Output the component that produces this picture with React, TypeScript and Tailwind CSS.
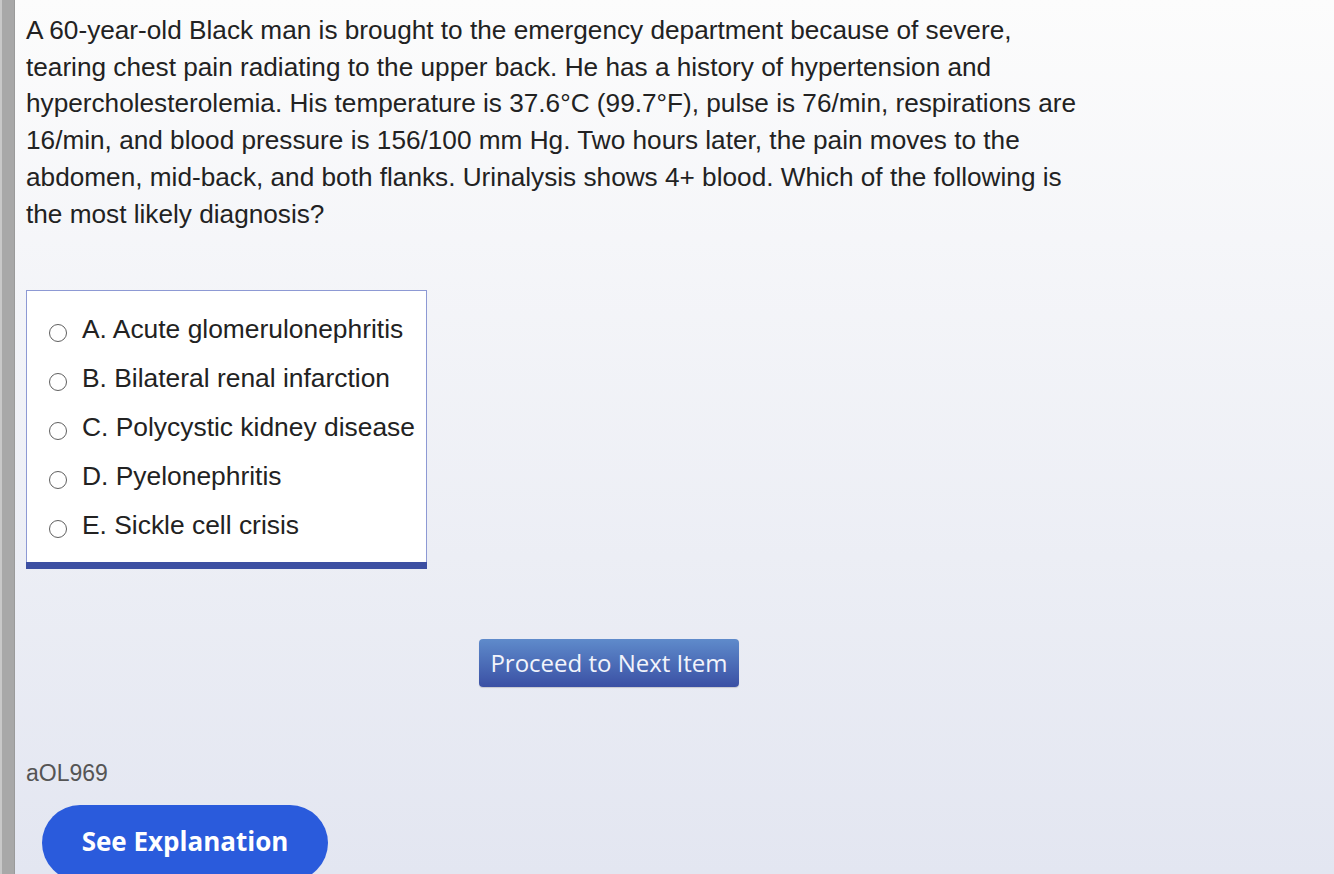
import React from "react";

const options = [
  "A. Acute glomerulonephritis",
  "B. Bilateral renal infarction",
  "C. Polycystic kidney disease",
  "D. Pyelonephritis",
  "E. Sickle cell crisis",
];

const lines = [
  "A 60-year-old Black man is brought to the emergency department because of severe,",
  "tearing chest pain radiating to the upper back. He has a history of hypertension and",
  "hypercholesterolemia. His temperature is 37.6°C (99.7°F), pulse is 76/min, respirations are",
  "16/min, and blood pressure is 156/100 mm Hg. Two hours later, the pain moves to the",
  "abdomen, mid-back, and both flanks. Urinalysis shows 4+ blood. Which of the following is",
  "the most likely diagnosis?",
];

export default function App() {
  return (
    <div className="flex h-[874px] w-[1334px] overflow-hidden bg-gradient-to-b from-[#fcfcfc] to-[#e3e6f1]">
      <div className="flex h-full w-[15px] shrink-0">
        <div className="w-[2px] bg-[#c8c8c8]" />
        <div className="w-[12px] bg-[#a8a8a8]" />
        <div className="w-[1px] bg-[#9a9a9a]" />
      </div>
      <div className="flex flex-1 flex-col pl-[11px] pt-[12px] font-['Liberation_Sans',Arial,sans-serif]">
        <p className="w-[1200px] text-[26.2px] leading-[36.7px] text-[#222]">
          {lines.map((l, i) => (
            <React.Fragment key={i}>
              {l}
              {i < lines.length - 1 && <br />}
            </React.Fragment>
          ))}
        </p>
        <div className="mt-[58px] flex w-[401px] flex-col border border-[#8d99d4] border-b-0 bg-white">
          <div className="flex flex-col gap-[13px] pl-[22px] pt-[21px] pb-[18px]">
            {options.map((o) => (
              <div key={o} className="flex h-[36px] items-center gap-[15px]">
                <span className="mt-[6px] h-[18px] w-[18px] shrink-0 rounded-full border-[1.5px] border-[#5f5f5f] bg-white" />
                <span className="text-[26.4px] text-[#222]">{o}</span>
              </div>
            ))}
          </div>
          <div className="-mx-px h-[7px] bg-[#3c4fa2]" />
        </div>
        <div className="mt-[70px] flex w-[1080px] pl-[453px]">
          <button className="h-[48px] w-[260px] rounded-[4px] bg-gradient-to-b from-[#5f8bcb] to-[#3b50a4] font-['Open_Sans',sans-serif] text-[24px] text-[#f2f4fb] shadow-[0_1px_1px_rgba(0,0,0,0.15)]">
            Proceed to Next Item
          </button>
        </div>
        <div className="mt-[69px] text-[23px] text-[#555]">aOL969</div>
        <div className="mt-[14px] pl-[16px]">
          <button className="h-[76px] w-[286px] rounded-full bg-[#2a5bdc] pb-[2px] font-['Open_Sans',sans-serif] text-[26px] font-bold text-white">
            See Explanation
          </button>
        </div>
      </div>
    </div>
  );
}
